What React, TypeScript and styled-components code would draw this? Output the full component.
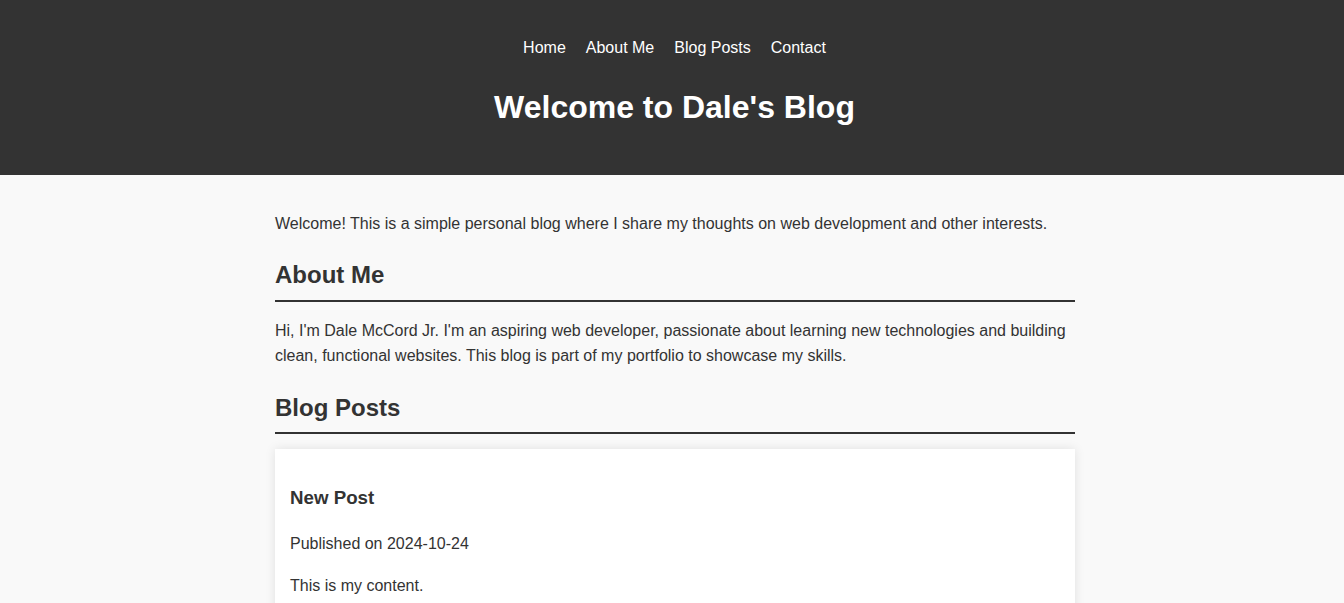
import styled, { createGlobalStyle } from 'styled-components'

const GlobalStyle = createGlobalStyle`
  body {
    margin: 0;
    font-family: "Liberation Sans", Arial, sans-serif;
    line-height: 1.6;
    background: #f9f9f9;
    color: #333;
  }
`

const StyledHeader = styled.header`
  background: #333;
  color: #fff;
  text-align: center;
  padding: 19px 0 20px 5px;
`

const StyledNavList = styled.ul`
  list-style: none;
  margin: 16px 0;
  padding: 0;
`

const StyledNavItem = styled.li`
  display: inline;
  margin: 0 10px;
`

const StyledNavLink = styled.a`
  color: #fff;
  text-decoration: none;
`

const StyledTitle = styled.h1`
  font-size: 32px;
  margin: 21.44px 0;
`

const StyledBody = styled.div`
  padding-left: 6px;
`

const StyledMain = styled.main`
  max-width: 800px;
  margin: 0 auto;
  padding: 20px;
`

const StyledSectionTitle = styled.h2`
  font-size: 24px;
  margin: 20px 0 15px;
  padding-bottom: 5px;
  border-bottom: 2px solid #333;
`

const StyledText = styled.p`
  margin: 16px 0;
`

const StyledPostText = styled.p`
  margin: 16.5px 0;
`

const StyledPost = styled.article`
  background: #fff;
  padding: 15px;
  margin-bottom: 20px;
  box-shadow: 0 0 10px rgba(0, 0, 0, 0.1);
`

const StyledPostTitle = styled.h3`
  font-size: 18.72px;
  margin: 18.72px 0 18px;
`

const navLinks = ['Home', 'About Me', 'Blog Posts', 'Contact']

export default function App() {
  return (
    <>
      <GlobalStyle />
      <StyledHeader>
        <nav>
          <StyledNavList>
            {navLinks.map((label) => (
              <StyledNavItem key={label}>
                <StyledNavLink href="#">{label}</StyledNavLink>
              </StyledNavItem>
            ))}
          </StyledNavList>
        </nav>
        <StyledTitle>Welcome to Dale's Blog</StyledTitle>
      </StyledHeader>

      <StyledBody>
        <StyledMain>
          <StyledText>
            Welcome! This is a simple personal blog where I share my thoughts on web development and other
            interests.
          </StyledText>

          <section>
            <StyledSectionTitle>About Me</StyledSectionTitle>
            <StyledText>
              Hi, I'm Dale McCord Jr. I'm an aspiring web developer, passionate about learning new technologies
              and building clean, functional websites. This blog is part of my portfolio to showcase my skills.
            </StyledText>
          </section>

          <section>
            <StyledSectionTitle>Blog Posts</StyledSectionTitle>
            <StyledPost>
              <StyledPostTitle>New Post</StyledPostTitle>
              <StyledPostText>Published on 2024-10-24</StyledPostText>
              <StyledPostText>This is my content.</StyledPostText>
            </StyledPost>
          </section>
        </StyledMain>
      </StyledBody>
    </>
  )
}
